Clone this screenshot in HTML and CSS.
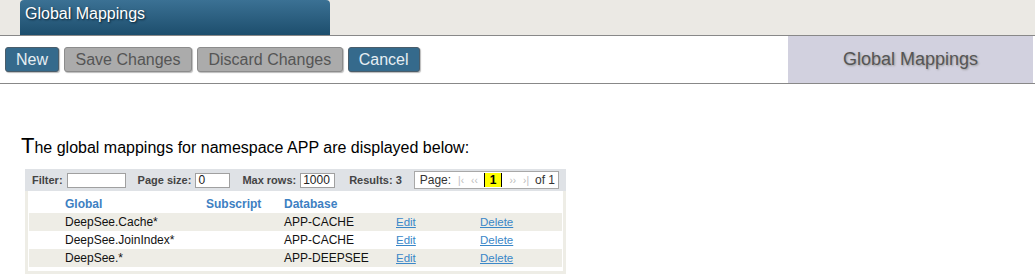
FILE: index.html
```html
<!DOCTYPE html>
<html lang="en">

<head>
    <meta charset="UTF-8">
    <title>Global Mappings</title>
    <link rel="stylesheet" href="styles.css">
</head>

<body>
    <!-- Title tab -->
    <div class="top-bar">
        <div class="tab">Global Mappings</div>
    </div>

    <!-- Command buttons -->
    <div class="toolbar">
        <div class="buttons">
            <button class="btn btn-blue">New</button>
            <button class="btn btn-gray">Save Changes</button>
            <button class="btn btn-gray">Discard Changes</button>
            <button class="btn btn-blue">Cancel</button>
        </div>
        <div class="title-box">Global Mappings</div>
    </div>

    <div class="content">
        <p class="intro"><span class="big">T</span>he global mappings for namespace APP are displayed below:</p>

        <div class="grid">
            <div class="grid-bar">
                <span class="bar-label">Filter:</span>
                <input type="text" class="bar-input filter-input">
                <span class="bar-label gap">Page size:</span>
                <input type="text" class="bar-input size-input" value="0">
                <span class="bar-label gap">Max rows:</span>
                <input type="text" class="bar-input rows-input" value="1000">
                <span class="bar-label gap">Results: 3</span>
                <div class="pager">
                    <span class="pager-label">Page:</span>
                    <span class="pager-arrow">|&lsaquo;</span>
                    <span class="pager-arrow">&lsaquo;&lsaquo;</span>
                    <span class="pager-current">1</span>
                    <span class="pager-arrow">&rsaquo;&rsaquo;</span>
                    <span class="pager-arrow">&rsaquo;|</span>
                    <span class="pager-label">of 1</span>
                </div>
            </div>

            <div class="grid-body">
                <table class="mappings">
                    <colgroup>
                        <col class="col-sel">
                        <col class="col-global">
                        <col class="col-sub">
                        <col class="col-db">
                        <col class="col-edit">
                        <col>
                    </colgroup>
                    <thead>
                        <tr>
                            <th></th>
                            <th>Global</th>
                            <th>Subscript</th>
                            <th>Database</th>
                            <th></th>
                            <th></th>
                        </tr>
                    </thead>
                    <tbody>
                        <tr class="odd">
                            <td></td>
                            <td>DeepSee.Cache*</td>
                            <td></td>
                            <td>APP-CACHE</td>
                            <td><a href="#">Edit</a></td>
                            <td><a href="#">Delete</a></td>
                        </tr>
                        <tr>
                            <td></td>
                            <td>DeepSee.JoinIndex*</td>
                            <td></td>
                            <td>APP-CACHE</td>
                            <td><a href="#">Edit</a></td>
                            <td><a href="#">Delete</a></td>
                        </tr>
                        <tr class="odd">
                            <td></td>
                            <td>DeepSee.*</td>
                            <td></td>
                            <td>APP-DEEPSEE</td>
                            <td><a href="#">Edit</a></td>
                            <td><a href="#">Delete</a></td>
                        </tr>
                    </tbody>
                </table>
            </div>
        </div>
    </div>
</body>

</html>
```

FILE: styles.css
```css
body {
    margin: 0;
    background-color: #ffffff;
    font-family: 'Liberation Sans', Arial, sans-serif;
    color: #000000;
}

/* Title tab */
.top-bar {
    height: 35px;
    background-color: #ebe9e4;
    padding-left: 20px;
}

.tab {
    width: 305px;
    height: 35px;
    padding-left: 5px;
    background: linear-gradient(to bottom, #3b7194, #1d4e6d);
    border-radius: 4px 4px 0 0;
    color: #ffffff;
    font-size: 16px;
    line-height: 27px;
    text-shadow: 1px 1px 2px #0a2233;
}

/* Command buttons */
.toolbar {
    display: flex;
    height: 47px;
    border-top: 1px solid #888888;
    border-bottom: 1px solid #888888;
}

.buttons {
    flex: 1;
    display: flex;
    align-items: flex-start;
    gap: 5px;
    padding: 11px 0 0 5px;
}

.btn {
    height: 25px;
    padding: 0 10px;
    border: 1px solid #666666;
    border-radius: 3px;
    font-family: 'Liberation Sans', Arial, sans-serif;
    font-size: 16px;
    box-shadow: 1px 1px 1px #bbbbbb;
    cursor: pointer;
}

.btn-blue {
    background-color: #356a8c;
    color: #e6eef3;
    border-color: #4a5d6a;
}

.btn-gray {
    background-color: #ababab;
    color: #555555;
    border-color: #8c8c8c;
    padding: 0 10.5px;
}

.title-box {
    width: 245px;
    margin-right: 2px;
    background-color: #d2d1df;
    color: #555555;
    font-size: 18px;
    display: flex;
    align-items: center;
    justify-content: center;
    text-shadow: 1px 1px 2px #999999;
}

/* Main content */
.content {
    padding: 0 0 0 21px;
}

.intro {
    margin: 49px 0 10px 0;
    font-size: 16px;
    color: #000000;
}

.big {
    font-size: 22px;
}

.grid {
    width: 541px;
    margin-left: 4px;
}

.grid-bar {
    display: flex;
    align-items: center;
    height: 22px;
    padding-left: 7px;
    background-color: #dfe2e6;
}

.bar-label {
    font-size: 11px;
    font-weight: bold;
    color: #444444;
    margin-right: 4px;
}

.bar-label.gap {
    margin-left: 12px;
}

.bar-input {
    height: 15px;
    box-sizing: border-box;
    border: 1px solid #a0a0a0;
    padding: 0 2px;
    font-family: 'Liberation Sans', Arial, sans-serif;
    font-size: 12px;
    color: #222222;
    background-color: #ffffff;
}

.filter-input {
    width: 59px;
}

.size-input {
    width: 35px;
}

.rows-input {
    width: 35px;
    margin-right: 2px;
}

.pager {
    display: flex;
    align-items: center;
    height: 16px;
    margin-left: 8px;
    padding: 0 3px 0 5px;
    border: 1px solid #a8a8a8;
    background-color: #ffffff;
    font-size: 12px;
}

.pager-label {
    color: #333333;
}

.pager-arrow {
    color: #bbbbbb;
    font-size: 10px;
    margin-left: 7px;
}

.pager-current {
    background-color: #ffff00;
    border-left: 1px solid #000000;
    border-right: 1px solid #000000;
    font-weight: bold;
    padding: 0 5px;
    margin-left: 6px;
    line-height: 14px;
}

.pager .pager-label:last-child {
    margin-left: 6px;
}

.grid-body {
    border: 3px solid #eeede6;
    border-top-width: 0;
    padding: 3px 1px 4px 1px;
    background-color: #ffffff;
}

.mappings {
    width: 100%;
    border-collapse: collapse;
    table-layout: fixed;
    font-size: 12px;
}

.col-sel {
    width: 32px;
}

.col-global {
    width: 141px;
}

.col-sub {
    width: 78px;
}

.col-db {
    width: 112px;
}

.col-edit {
    width: 84px;
}

.mappings th {
    text-align: left;
    color: #3d80c2;
    font-weight: bold;
    height: 19px;
    padding: 0 4px;
}

.mappings td {
    height: 18px;
    padding: 0 4px;
    color: #111111;
}

.mappings tr.odd td {
    background-color: #eeede6;
}

.mappings a {
    color: #3a87c8;
    text-decoration: underline;
    font-size: 11.5px;
}
```
